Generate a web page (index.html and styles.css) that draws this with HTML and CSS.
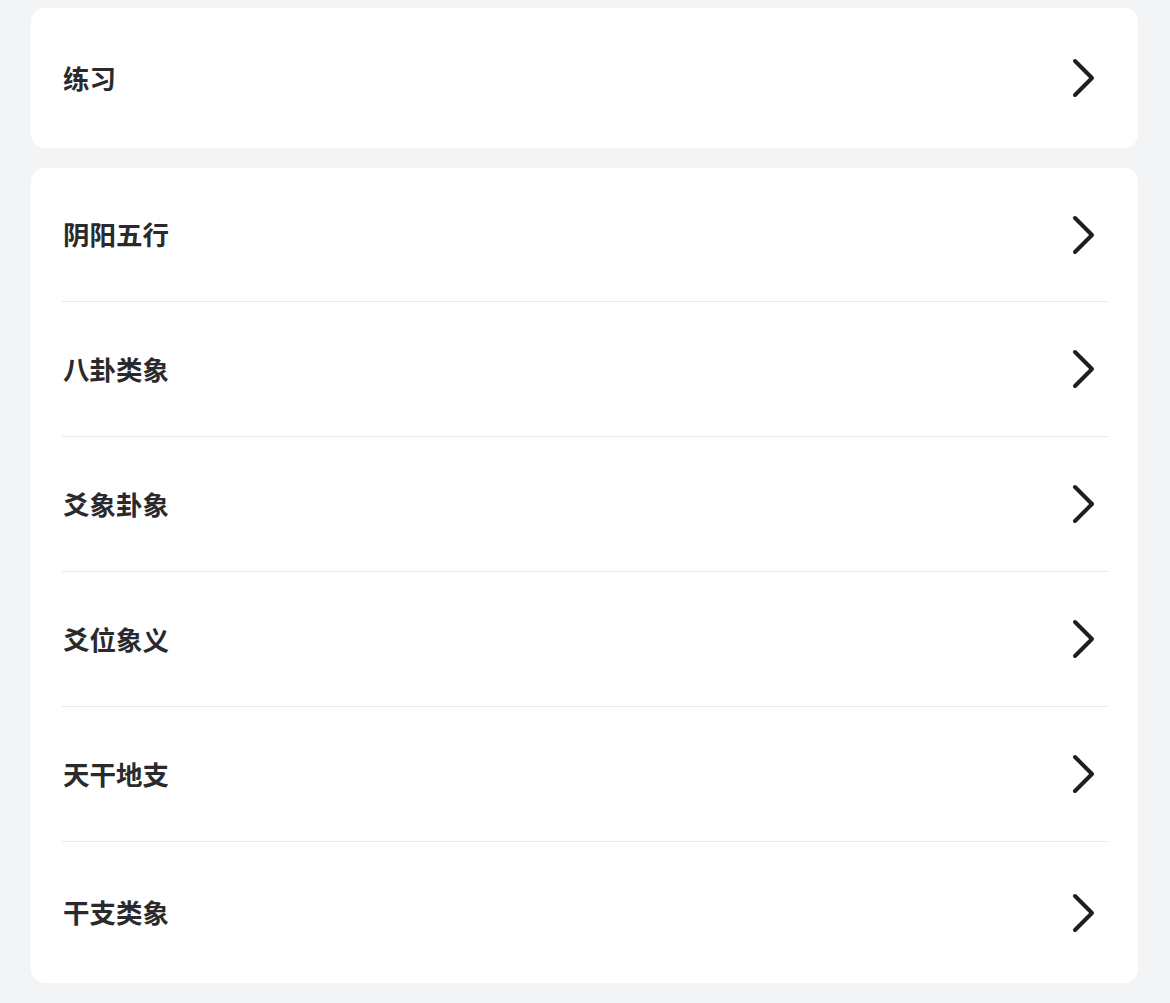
FILE: index.html
```html
<!DOCTYPE html>
<html lang="zh-CN">
<head>
<meta charset="utf-8">
<title>练习</title>
<link rel="stylesheet" href="styles.css">
</head>
<body>
<div class="page">
  <div class="card card-single">
    <div class="row"><span class="label">练习</span><svg class="chev" viewBox="0 0 24 40" width="24" height="40"><polyline points="3,3 20,20 3,37"/></svg></div>
  </div>
  <div class="card card-list">
    <div class="row"><span class="label">阴阳五行</span><svg class="chev" viewBox="0 0 24 40" width="24" height="40"><polyline points="3,3 20,20 3,37"/></svg></div>
    <div class="row"><span class="label">八卦类象</span><svg class="chev" viewBox="0 0 24 40" width="24" height="40"><polyline points="3,3 20,20 3,37"/></svg></div>
    <div class="row"><span class="label">爻象卦象</span><svg class="chev" viewBox="0 0 24 40" width="24" height="40"><polyline points="3,3 20,20 3,37"/></svg></div>
    <div class="row"><span class="label">爻位象义</span><svg class="chev" viewBox="0 0 24 40" width="24" height="40"><polyline points="3,3 20,20 3,37"/></svg></div>
    <div class="row"><span class="label">天干地支</span><svg class="chev" viewBox="0 0 24 40" width="24" height="40"><polyline points="3,3 20,20 3,37"/></svg></div>
    <div class="row"><span class="label">干支类象</span><svg class="chev" viewBox="0 0 24 40" width="24" height="40"><polyline points="3,3 20,20 3,37"/></svg></div>
  </div>
</div>
</body>
</html>
```

FILE: styles.css
```css
html, body {
  margin: 0;
  padding: 0;
  background: #f3f4f6;
}
body {
  font-family: "Noto Sans CJK SC", "Noto Sans", sans-serif;
}
.page {
  display: flex;
  flex-direction: column;
  gap: 20px;
  padding: 8px 32px 20px 31px;
}
.card {
  background: #ffffff;
  border-radius: 14px;
  padding: 0 30px 0 31px;
}
.row {
  display: flex;
  align-items: center;
  justify-content: space-between;
  padding: 0 12px 0 1px;
  box-sizing: border-box;
}
.card-single .row {
  height: 140px;
}
.card-list .row {
  height: 135px;
  border-bottom: 1px solid #e7e8ea;
}
.card-list .row:first-child {
  height: 134px;
}
.card-list .row:last-child {
  height: 141px;
  border-bottom: none;
}
.label {
  font-size: 26.5px;
  font-weight: 700;
  color: #2a2a2d;
  line-height: 1;
}
.chev {
  display: block;
  fill: none;
  stroke: #1f1f22;
  stroke-width: 4;
  stroke-linecap: round;
  stroke-linejoin: round;
}
```
